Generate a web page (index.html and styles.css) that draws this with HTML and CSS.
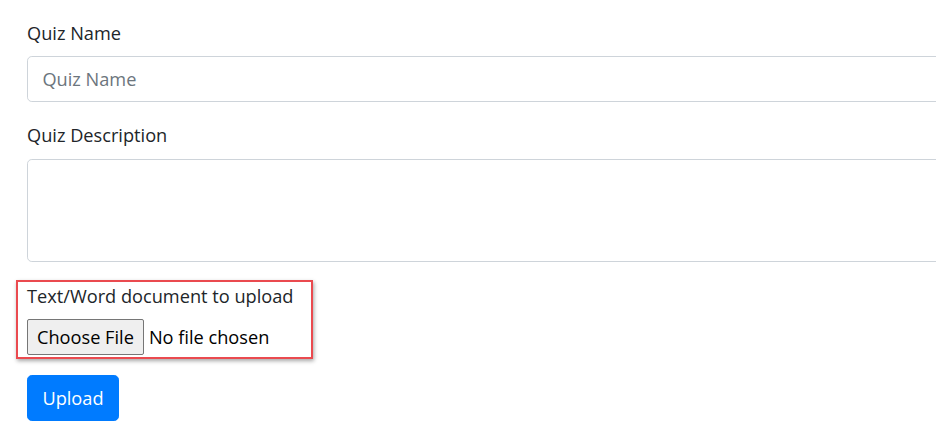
FILE: index.html
```html
<!DOCTYPE html>
<html>
<head>
<meta charset="utf-8">
<link rel="stylesheet" href="styles.css">
</head>
<body>
<form class="quiz-form">
  <div class="form-group">
    <label class="form-label" for="qname">Quiz Name</label>
    <input class="form-control" id="qname" type="text" placeholder="Quiz Name">
  </div>
  <div class="form-group">
    <label class="form-label" for="qdesc">Quiz Description</label>
    <textarea class="form-control textarea" id="qdesc"></textarea>
  </div>
  <div class="form-group upload-group">
    <label class="form-label" for="qfile">Text/Word document to upload</label>
    <div class="file-row">
      <span class="file-btn">Choose File</span>
      <span class="file-text">No file chosen</span>
    </div>
    <div class="highlight"></div>
  </div>
  <button class="btn-primary" type="button">Upload</button>
</form>
</body>
</html>
```

FILE: styles.css
```css
html, body {
  margin: 0;
  padding: 0;
  background: #fff;
  overflow: hidden;
}
body {
  font-family: "Segoe UI", "Open Sans", "Noto Sans", sans-serif;
  font-size: 18.2px;
  line-height: 28.8px;
  color: #212529;
}
.quiz-form {
  width: 1100px;
  padding: 18.5px 0 0 27px;
}
.form-group {
  margin-bottom: 19.8px;
}
.form-label {
  display: block;
  margin-bottom: 8.7px;
}
.form-control {
  display: block;
  box-sizing: border-box;
  width: 100%;
  height: 45.6px;
  padding: 7.2px 14.4px;
  font: inherit;
  color: #495057;
  background: #fff;
  border: 1.2px solid #ced4da;
  border-radius: 4.8px;
  outline: none;
}
.form-control::placeholder {
  color: #6c757d;
}
.textarea {
  height: 103.2px;
  resize: none;
}
.upload-group {
  position: relative;
}
.file-row {
  display: flex;
  align-items: center;
  height: 36px;
}
.file-btn {
  box-sizing: border-box;
  height: 36px;
  padding: 0 9px;
  display: flex;
  align-items: center;
  background: #efefef;
  border: 1px solid #767676;
  border-radius: 2px;
  color: #000;
}
.file-text {
  margin-left: 5px;
  color: #000;
}
.highlight {
  position: absolute;
  left: -11px;
  top: -1.5px;
  width: 297px;
  height: 79px;
  box-sizing: border-box;
  border: 2px solid #ea4a4f;
  box-shadow: 1px 2px 4px rgba(0, 0, 0, 0.35);
}
.btn-primary {
  display: block;
  height: 45.6px;
  padding: 0 14.4px;
  font: inherit;
  color: #fff;
  background: #007bff;
  border: 1px solid #007bff;
  border-radius: 4.8px;
}
```
